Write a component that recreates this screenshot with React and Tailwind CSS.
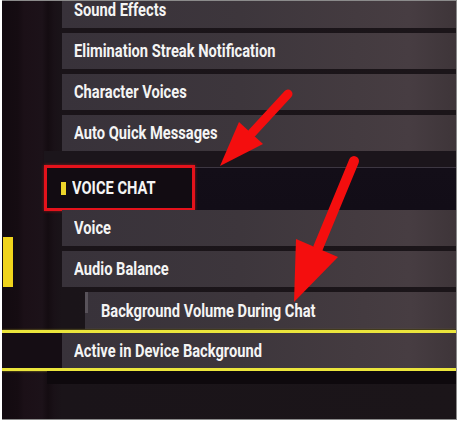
const rowBg =
  "bg-[linear-gradient(90deg,#38323a_0%,#3d363c_45%,#443b40_75%,#473d42_88%,#3e3539_100%)]";

// the game font is a narrow DIN-like face, so squeeze Roboto horizontally
const Label = ({ children }) => (
  <span className="inline-block origin-left scale-x-[0.815] whitespace-nowrap text-[18px] font-bold leading-none text-[#f4f4f4]">
    {children}
  </span>
);

const SettingRow = ({ label, indent = false, className = "" }) => (
  <div
    className={`flex h-[36px] shrink-0 items-center ${rowBg} ${
      indent ? "ml-[83px] pl-0" : "ml-[60px] pl-[12px]"
    } ${className}`}
  >
    {indent && <div className="mr-[13px] h-[21px] w-[3px] self-start bg-[#58525a]" />}
    <Label>{label}</Label>
  </div>
);

const Arrows = () => (
  <svg className="pointer-events-none absolute inset-0" width="455" height="420" viewBox="0 -1 455 420">
    {/* arrow pointing at the section header */}
    <line x1="286" y1="92" x2="250" y2="131" stroke="#f40e0e" strokeWidth="9" strokeLinecap="round" />
    <polygon points="261,142 237,120 218,164" fill="#f40e0e" />
    {/* arrow pointing at the background volume row */}
    <line x1="352" y1="159" x2="316" y2="246" stroke="#f40e0e" strokeWidth="10" strokeLinecap="round" />
    <polygon points="336,255 294,237 292,300" fill="#f40e0e" />
  </svg>
);

export default function App() {
  return (
    <div
      className="h-[421px] w-[460px] bg-white pb-[1px] pl-[2px] pr-[3px]"
      style={{ fontFamily: 'Roboto, "DejaVu Sans Condensed", sans-serif' }}
    >
      <div className="relative h-full overflow-hidden border-b border-r border-t border-[#8b8b8b] bg-[linear-gradient(90deg,#120a10_0px,#150c12_16px,#1b1017_22px,#1c1219_40px,#140c11_46px,#191117_52px,#1a1419_60px,#1b1519_100%)]">
        {/* side nav indicator */}
        <div className="absolute left-[1px] top-[236px] h-[50px] w-[10px] bg-[#f0d41c]" />

        <div className="-mt-[9px] flex flex-col">
          <div className="flex flex-col gap-[5px]">
            <SettingRow label="Sound Effects" />
            <SettingRow label="Elimination Streak Notification" />
            <SettingRow label="Character Voices" />
            <SettingRow label="Auto Quick Messages" />
          </div>

          <div className="ml-[42px] flex h-[59px] items-end bg-[linear-gradient(180deg,#1b151b_0px,#1b151b_16px,#3d3742_16px,#3d3742_17px,#130e18_17px,#120d17_100%)]">
            <div className="-mb-[1px] flex h-[46px] w-[151px] items-center gap-[6px] border-[3px] border-[#e4121b] bg-[#120c12] pl-[14px] shadow-[0_0_3px_rgba(255,30,30,0.5)]">
              <div className="h-[13px] w-[5px] shrink-0 bg-[#ecd42a]" />
              <Label>VOICE CHAT</Label>
            </div>
          </div>

          <div className="flex flex-col gap-[5px]">
            <SettingRow label="Voice" />
            <SettingRow label="Audio Balance" />
            <SettingRow label="Background Volume During Chat" indent className="h-[37px]" />
          </div>

          <div className="mt-[1px] flex h-[41px] border-y-[3px] border-[#ebe53c] bg-[#150d14] shadow-[0_0_2px_rgba(230,220,40,0.6)]">
            <div className="w-[60px]" />
            <div className={`flex flex-1 items-center pl-[12px] ${rowBg}`}>
              <Label>Active in Device Background</Label>
            </div>
          </div>

          <div className="ml-[45px] h-[13px] bg-[#0e090d]" />
        </div>

        <Arrows />
      </div>
    </div>
  );
}
